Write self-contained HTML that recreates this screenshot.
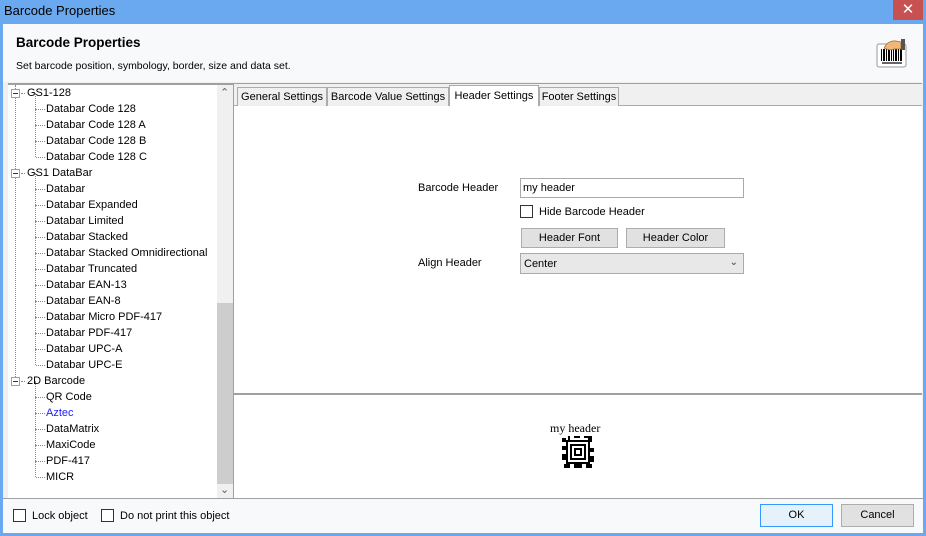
<!DOCTYPE html>
<html><head><style>
*{margin:0;padding:0;box-sizing:border-box}
body{width:926px;height:536px;background:#6aa9ef;font-family:"Liberation Sans",Arial,sans-serif;font-size:11px;color:#000;position:relative;overflow:hidden}
.a{position:absolute;white-space:nowrap}
.title{left:4px;top:3px;font-size:13px;color:#000}
.close{left:893px;top:0;width:30px;height:20px;background:#c75050;color:#fff;font-size:15px;text-align:center;line-height:20px}
.win{left:3px;top:24px;width:920px;height:509px;background:#f0f0f0}
.hdr{left:3px;top:24px;width:920px;height:58px;background:#f8f9fb}
.tree{left:8px;top:84px;width:225px;height:414px;background:#fff;border-top:1px solid #a0a0a0}
.row{position:absolute;white-space:nowrap;font-size:11px;line-height:16px}
.box{position:absolute;width:9px;height:9px;border:1px solid #a0a0a0;background:#fff}
.box:after{content:"";position:absolute;left:1px;top:3px;width:5px;height:1px;background:#333}
.dv{position:absolute;border-left:1px dotted #888;width:0}
.dh{position:absolute;border-top:1px dotted #888;height:0}
.btn{position:absolute;background:#e1e1e1;border:1px solid #adadad;text-align:center;font-size:11px}
.cb{position:absolute;width:13px;height:13px;border:1px solid #333;background:#fff}
.tab{position:absolute;top:87px;height:19px;background:#f0f0f0;border:1px solid #ababab;border-bottom:none;font-size:11px;line-height:18px;text-align:center;white-space:nowrap}
</style></head><body>
<div class="a title">Barcode Properties</div>
<div class="a close">✕</div>
<div class="a win"></div>
<div class="a hdr"></div>
<div class="a" style="left:16px;top:35px;font-size:13.5px;font-weight:bold">Barcode Properties</div>
<div class="a" style="left:16px;top:60px;font-size:10.5px">Set barcode position, symbology, border, size and data set.</div>
<svg class="a" style="left:876px;top:38px" width="32" height="30" viewBox="0 0 32 30">
<rect x="1" y="6" width="29" height="23" rx="2" fill="#fff" stroke="#999"/>
<g fill="#000"><rect x="5" y="11" width="1" height="12"/><rect x="7" y="11" width="2" height="12"/><rect x="10" y="11" width="1" height="12"/><rect x="12" y="11" width="2" height="12"/><rect x="15" y="11" width="1" height="12"/><rect x="17" y="11" width="1" height="12"/><rect x="19" y="11" width="2" height="12"/><rect x="22" y="11" width="1" height="12"/><rect x="24" y="11" width="2" height="12"/></g>
<rect x="6" y="24" width="20" height="2" fill="#666"/>
<path d="M8 10 Q12 2 20 3 L25 4 L25 11 L18 11 Q14 13 8 10Z" fill="#f0b878" stroke="#a06a30" stroke-width=".7"/>
<rect x="25" y="1" width="4" height="11" fill="#555"/>
</svg>
<div class="a" style="left:8px;top:83px;width:914px;height:1px;background:#a0a0a0"></div>
<div class="a tree">
<div class="a" style="left:209px;top:0;width:16px;height:413px;background:#f0f0f0"></div>
<div class="a" style="left:209px;top:218px;width:16px;height:181px;background:#cdcdcd"></div>
<div class="a" style="left:212px;top:1px;font-size:11px;color:#606060">&#8963;</div>
<div class="a" style="left:212px;top:398px;font-size:11px;color:#606060">&#8964;</div>
</div>
<div id="t"></div>
<div class="a" style="left:233px;top:84px;width:1px;height:414px;background:#a0a0a0"></div>
<div class="a" style="left:234px;top:105px;width:688px;height:288px;background:#fff;border-top:1px solid #ababab"></div>
<div class="a" style="left:234px;top:393px;width:688px;height:2px;background:#a0a0a0"></div>
<div class="a" style="left:234px;top:395px;width:688px;height:103px;background:#fff"></div>
<div class="tab" style="left:237px;width:90px">General Settings</div>
<div class="tab" style="left:327px;width:122px">Barcode Value Settings</div>
<div class="tab" style="left:449px;top:85px;height:21px;width:90px;background:#fff;line-height:20px">Header Settings</div>
<div class="tab" style="left:539px;width:80px">Footer Settings</div>
<div class="a" style="left:418px;top:182px">Barcode Header</div>
<div class="a" style="left:520px;top:178px;width:224px;height:20px;border:1px solid #aaa;background:#fff;padding:2px 2px;line-height:14px">my header</div>
<div class="cb" style="left:520px;top:205px"></div>
<div class="a" style="left:539px;top:206px">Hide Barcode Header</div>
<div class="btn" style="left:521px;top:228px;width:97px;height:20px;line-height:18px">Header Font</div>
<div class="btn" style="left:626px;top:228px;width:99px;height:20px;line-height:18px">Header Color</div>
<div class="a" style="left:418px;top:257px">Align Header</div>
<div class="a" style="left:520px;top:253px;width:224px;height:21px;border:1px solid #aaa;background:#e8e8e8;padding:3px 3px;line-height:14px">Center<span style="position:absolute;right:5px;top:2px;font-size:10px;color:#444">&#8964;</span></div>
<div class="a" style="left:550px;top:421px;font-family:'Liberation Serif',serif;font-size:12px">my header</div>
<svg class="a" style="left:562px;top:436px" width="32" height="32" viewBox="0 0 16 16" shape-rendering="crispEdges">
<g fill="#000">
<rect x="0" y="1" width="2" height="2"/><rect x="3" y="0" width="1" height="2"/><rect x="6" y="0" width="3" height="1"/><rect x="11" y="0" width="4" height="1"/><rect x="13" y="1" width="2" height="2"/>
<rect x="2" y="2" width="12" height="12"/>
<rect x="0" y="5" width="2" height="2"/><rect x="0" y="9" width="2" height="3"/><rect x="14" y="6" width="2" height="2"/><rect x="14" y="10" width="2" height="3"/>
<rect x="1" y="14" width="3" height="2"/><rect x="6" y="14" width="4" height="2"/><rect x="12" y="14" width="3" height="2"/>
</g>
<g fill="#fff"><rect x="3" y="3" width="10" height="10"/></g>
<g fill="#000"><rect x="4" y="4" width="8" height="8"/></g>
<g fill="#fff"><rect x="5" y="5" width="6" height="6"/></g>
<g fill="#000"><rect x="6" y="6" width="4" height="4"/></g>
<g fill="#fff"><rect x="7" y="7" width="2" height="2"/><rect x="3" y="6" width="1" height="2"/><rect x="12" y="9" width="1" height="2"/></g>
</svg>
<div class="a" style="left:3px;top:498px;width:920px;height:1px;background:#a0a0a0"></div>
<div class="a" style="left:3px;top:499px;width:920px;height:34px;background:#f8f9fb"></div>
<div class="cb" style="left:13px;top:509px"></div>
<div class="a" style="left:32px;top:510px">Lock object</div>
<div class="cb" style="left:101px;top:509px"></div>
<div class="a" style="left:120px;top:510px">Do not print this object</div>
<div class="btn" style="left:760px;top:504px;width:73px;height:23px;line-height:21px;border-color:#3399ff;background:#e5f1fb">OK</div>
<div class="btn" style="left:841px;top:504px;width:73px;height:23px;line-height:21px">Cancel</div>
<script>
var rows=[[0,"GS1-128"],[1,"Databar Code 128"],[1,"Databar Code 128 A"],[1,"Databar Code 128 B"],[1,"Databar Code 128 C"],[0,"GS1 DataBar"],[1,"Databar"],[1,"Databar Expanded"],[1,"Databar Limited"],[1,"Databar Stacked"],[1,"Databar Stacked Omnidirectional"],[1,"Databar Truncated"],[1,"Databar EAN-13"],[1,"Databar EAN-8"],[1,"Databar Micro PDF-417"],[1,"Databar PDF-417"],[1,"Databar UPC-A"],[1,"Databar UPC-E"],[0,"2D Barcode"],[1,"QR Code"],[1,"Aztec"],[1,"DataMatrix"],[1,"MaxiCode"],[1,"PDF-417"],[1,"MICR"]];
var h="";
h+='<div class="dv" style="left:15px;top:85px;height:296px"></div>';
rows.forEach(function(r,i){var y=85+16*i,c=y+8;
if(r[0]==0){h+='<div class="box" style="left:11px;top:'+(c-4)+'px"></div><div class="dh" style="left:21px;top:'+c+'px;width:4px"></div><div class="row" style="left:27px;top:'+y+'px">'+r[1]+'</div>';}
else{h+='<div class="dv" style="left:35px;top:'+(c-16)+'px;height:16px"></div><div class="dh" style="left:36px;top:'+c+'px;width:9px"></div><div class="row" style="left:46px;top:'+y+'px;'+(r[1]=="Aztec"?'color:#2020ff':'')+'">'+r[1]+'</div>';}
});
document.getElementById("t").innerHTML=h;
</script>
</body></html>
